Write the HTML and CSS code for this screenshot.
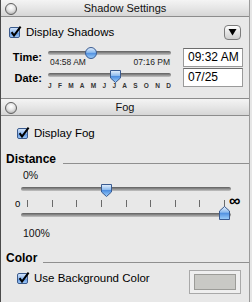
FILE: index.html
```html
<!DOCTYPE html>
<html>
<head>
<meta charset="utf-8" />
<link rel="stylesheet" href="styles.css">
<title>Shadow Settings</title>
</head>
<body>
<div class="window">

<div class="panelHeader">
  <span class="closeDot"></span>
  <span class="panelTitle">Shadow Settings</span>
</div>

<div class="panel shadowPanel">
  <div class="topRow">
    <div class="check">
      <svg class="checkBox" width="13" height="13" viewBox="0 0 13 13">
        <defs>
          <linearGradient id="cb1" x1="0" y1="0" x2="0" y2="1">
            <stop offset="0" stop-color="#d9e8fb"/>
            <stop offset="0.5" stop-color="#8fb8ee"/>
            <stop offset="0.55" stop-color="#5b94e2"/>
            <stop offset="1" stop-color="#a6cdf7"/>
          </linearGradient>
        </defs>
        <rect x="0.5" y="1.5" width="10" height="10" rx="1.5" fill="url(#cb1)" stroke="#3b5a8c"/>
        <path d="M2.6 6.2 L5 9.6 L11.6 0.6" fill="none" stroke="#000" stroke-width="2"/>
      </svg>
      <span>Display Shadows</span>
    </div>
    <span class="popButton">
      <svg width="9" height="8" viewBox="0 0 9 8"><path d="M0.5 1 H8.5 L4.5 7.5 Z" fill="#000"/></svg>
    </span>
  </div>

  <div class="sliderGrid">
    <div class="fieldLabel timeLabel">Time:</div>
    <div class="sliderCell">
      <div class="track timeTrack">
        <span class="thumb thumbTime">
          <svg width="12" height="12" viewBox="0 0 12 12">
            <defs>
              <linearGradient id="tb1" x1="0" y1="0" x2="0" y2="1">
                <stop offset="0" stop-color="#e6f1fd"/>
                <stop offset="0.45" stop-color="#8ab9ee"/>
                <stop offset="0.5" stop-color="#4f8fe0"/>
                <stop offset="1" stop-color="#9fd0fb"/>
              </linearGradient>
            </defs>
            <circle cx="6" cy="6" r="5.5" fill="url(#tb1)" stroke="#3a5b90"/>
          </svg>
        </span>
      </div>
      <div class="timeLabels"><span>04:58 AM</span><span>07:16 PM</span></div>
    </div>
    <div class="textBox">09:32 AM</div>

    <div class="fieldLabel dateLabel">Date:</div>
    <div class="sliderCell">
      <div class="track dateTrack">
        <span class="thumb thumbDate">
          <svg width="11" height="13" viewBox="0 0 11 13">
            <defs>
              <linearGradient id="tb2" x1="0" y1="0" x2="0" y2="1">
                <stop offset="0" stop-color="#e6f1fd"/>
                <stop offset="0.45" stop-color="#8ab9ee"/>
                <stop offset="0.5" stop-color="#4f8fe0"/>
                <stop offset="1" stop-color="#9fd0fb"/>
              </linearGradient>
            </defs>
            <path d="M0.5 0.5 H10.5 V8 L5.5 12.5 L0.5 8 Z" fill="url(#tb2)" stroke="#3a5b90"/>
          </svg>
        </span>
      </div>
      <div class="months">
        <span>J</span><span>F</span><span>M</span><span>A</span><span>M</span><span>J</span>
        <span>J</span><span>A</span><span>S</span><span>O</span><span>N</span><span>D</span>
      </div>
    </div>
    <div class="textBox">07/25</div>
  </div>
</div>

<div class="panelHeader">
  <span class="closeDot"></span>
  <span class="panelTitle">Fog</span>
</div>

<div class="panel fogPanel">
  <div class="check fogCheck">
    <svg class="checkBox" width="13" height="13" viewBox="0 0 13 13">
      <defs>
        <linearGradient id="cb2" x1="0" y1="0" x2="0" y2="1">
          <stop offset="0" stop-color="#d9e8fb"/>
          <stop offset="0.5" stop-color="#8fb8ee"/>
          <stop offset="0.55" stop-color="#5b94e2"/>
          <stop offset="1" stop-color="#a6cdf7"/>
        </linearGradient>
      </defs>
      <rect x="0.5" y="1.5" width="10" height="10" rx="1.5" fill="url(#cb2)" stroke="#3b5a8c"/>
      <path d="M2.6 6.2 L5 9.6 L11.6 0.6" fill="none" stroke="#000" stroke-width="2"/>
    </svg>
    <span>Display Fog</span>
  </div>

  <div class="groupHead distanceHead">
    <span>Distance</span>
    <span class="groupRule"></span>
  </div>

  <div class="smallValue zeroPct">0%</div>

  <div class="distRow distNear">
    <div class="track">
      <span class="thumb thumbNear">
        <svg width="11" height="13" viewBox="0 0 11 13">
          <defs>
            <linearGradient id="tb3" x1="0" y1="0" x2="0" y2="1">
              <stop offset="0" stop-color="#e6f1fd"/>
              <stop offset="0.45" stop-color="#8ab9ee"/>
              <stop offset="0.5" stop-color="#4f8fe0"/>
              <stop offset="1" stop-color="#9fd0fb"/>
            </linearGradient>
          </defs>
          <path d="M0.5 0.5 H10.5 V8 L5.5 12.5 L0.5 8 Z" fill="url(#tb3)" stroke="#3a5b90"/>
        </svg>
      </span>
    </div>
  </div>

  <div class="tickRow">
    <span class="tickEnd">0</span>
    <div class="ticks">
      <i></i><i></i><i></i><i></i><i></i><i></i><i></i><i></i><i></i>
    </div>
    <span class="infinity">&infin;</span>
  </div>

  <div class="distRow distFar">
    <div class="track">
      <span class="thumb thumbFar">
        <svg width="11" height="14" viewBox="0 0 11 14">
          <defs>
            <linearGradient id="tb4" x1="0" y1="0" x2="0" y2="1">
              <stop offset="0" stop-color="#e6f1fd"/>
              <stop offset="0.45" stop-color="#8ab9ee"/>
              <stop offset="0.5" stop-color="#4f8fe0"/>
              <stop offset="1" stop-color="#9fd0fb"/>
            </linearGradient>
          </defs>
          <path d="M0.5 13.5 H10.5 V5 L5.5 0.5 L0.5 5 Z" fill="url(#tb4)" stroke="#3a5b90"/>
        </svg>
      </span>
    </div>
  </div>

  <div class="smallValue fullPct">100%</div>

  <div class="groupHead colorHead">
    <span>Color</span>
    <span class="groupRule"></span>
  </div>

  <div class="colorRow">
    <div class="check">
      <svg class="checkBox" width="13" height="13" viewBox="0 0 13 13">
        <defs>
          <linearGradient id="cb3" x1="0" y1="0" x2="0" y2="1">
            <stop offset="0" stop-color="#d9e8fb"/>
            <stop offset="0.5" stop-color="#8fb8ee"/>
            <stop offset="0.55" stop-color="#5b94e2"/>
            <stop offset="1" stop-color="#a6cdf7"/>
          </linearGradient>
        </defs>
        <rect x="0.5" y="1.5" width="10" height="10" rx="1.5" fill="url(#cb3)" stroke="#3b5a8c"/>
        <path d="M2.6 6.2 L5 9.6 L11.6 0.6" fill="none" stroke="#000" stroke-width="2"/>
      </svg>
      <span>Use Background Color</span>
    </div>
    <div class="colorWell"><div class="colorSwatch"></div></div>
  </div>
</div>

</div>
</body>
</html>
```

FILE: styles.css
```css
body
{
    margin: 0;
    background-color: #e6e6e6;
    font-family: "Liberation Sans", Arial, sans-serif;
    color: #000;
}

.window
{
    width: 248px;
    height: 302px;
    border-left: 1px solid #4a4a4a;
    border-right: 1px solid #9a9a9a;
    background-color: #e8e8e8;
}

/* panel title bars */

.panelHeader
{
    display: grid;
    grid-template-columns: 1fr auto 1fr;
    align-items: start;
    height: 16px;
    border-bottom: 1px solid #8c8c8c;
    background: linear-gradient(#f4f4f4, #e6e6e6 50%, #d6d6d6);
}

.closeDot
{
    width: 10px;
    height: 10px;
    margin: 3px 0 0 4px;
    border: 1px solid #5f5f5f;
    border-radius: 50%;
    background: radial-gradient(circle at 50% 35%, #ffffff 0, #e4e4e4 45%, #9c9c9c 100%);
}

.panelTitle
{
    font-size: 11px;
    line-height: 17px;
    color: #111;
}

.panel
{
    box-sizing: border-box;
}

.shadowPanel
{
    height: 82px;
    border-bottom: 1px solid #8c8c8c;
}

/* checkboxes */

.check
{
    display: flex;
    align-items: center;
    font-size: 11.5px;
    line-height: 13px;
}

.checkBox
{
    flex: none;
    margin-right: 4px;
}

.topRow
{
    display: flex;
    align-items: center;
    justify-content: space-between;
    height: 14px;
    padding: 8px 8px 0 8px;
}

.popButton
{
    display: flex;
    align-items: center;
    justify-content: center;
    box-sizing: border-box;
    width: 17px;
    height: 15px;
    border: 1px solid #7c7c7c;
    border-radius: 4px;
    background: linear-gradient(#ffffff, #e4e4e4 50%, #cfcfcf);
}

/* time / date sliders */

.sliderGrid
{
    display: grid;
    grid-template-columns: 47px 135px 60px;
    grid-template-rows: 19px 19px;
    row-gap: 1px;
    margin-top: 9px;
}

.fieldLabel
{
    text-align: right;
    padding-right: 6px;
    font-size: 11px;
    font-weight: bold;
    line-height: 13px;
}

.timeLabel
{
    padding-top: 3px;
}

.dateLabel
{
    padding-top: 4px;
}

.sliderCell
{
    width: 123px;
}

.track
{
    position: relative;
    height: 4px;
    border-radius: 2px;
    background: linear-gradient(#5e5e5e, #8e8e8e 50%, #c4c4c4);
}

.timeTrack
{
    margin-top: 3px;
}

.dateTrack
{
    margin-top: 5px;
}

.thumb
{
    position: absolute;
    display: block;
    line-height: 0;
}

.thumbTime
{
    left: 37px;
    top: -4px;
}

.thumbDate
{
    left: 62px;
    top: -3px;
}

.timeLabels
{
    display: flex;
    justify-content: space-between;
    margin-top: 3px;
    padding: 0 1px 0 2px;
    font-size: 8.5px;
    line-height: 9px;
    color: #222;
}

.months
{
    display: flex;
    justify-content: space-between;
    margin-top: 5px;
    font-size: 6.5px;
    font-weight: bold;
    line-height: 7px;
    color: #333;
}

.textBox
{
    box-sizing: border-box;
    height: 19px;
    padding-left: 4px;
    border: 1px solid #9a9a9a;
    border-top-color: #6c6c6c;
    background-color: #fff;
    font-size: 12px;
    line-height: 17px;
}

/* fog panel */

.fogCheck
{
    margin: 11px 0 0 16px;
}

.groupHead
{
    display: flex;
    align-items: flex-start;
    padding-left: 5px;
    font-size: 12px;
    font-weight: bold;
    line-height: 14px;
}

.groupRule
{
    flex: 1;
    height: 11px;
    border-bottom: 1px solid #8f8f8f;
}

.distanceHead
{
    margin-top: 12px;
}

.distanceHead .groupRule
{
    margin-left: 7px;
}

.colorHead
{
    margin-top: 12px;
}

.colorHead .groupRule
{
    margin-left: 6px;
}

.smallValue
{
    padding-left: 22px;
    font-size: 10.5px;
    line-height: 11px;
    color: #111;
}

.zeroPct
{
    margin-top: 4px;
}

.fullPct
{
    margin-top: 5px;
}

.distRow
{
    width: 210px;
    padding-left: 20px;
}

.distNear
{
    height: 8px;
    margin-top: 6px;
}

.distNear .track
{
    margin-top: 2px;
}

.distFar
{
    height: 10px;
}

.distFar .track
{
    margin-top: 4px;
}

.thumbNear
{
    left: 80px;
    top: -3px;
}

.thumbFar
{
    left: 198px;
    top: -7px;
}

.tickRow
{
    display: flex;
    align-items: flex-start;
    height: 14px;
    padding-left: 14px;
}

.tickEnd
{
    width: 6px;
    margin-top: 4px;
    font-size: 9.5px;
    line-height: 10px;
}

.ticks
{
    display: flex;
    justify-content: space-between;
    width: 198px;
    margin: 5px 0 0 6px;
}

.ticks i
{
    display: block;
    width: 1px;
    height: 7px;
    background-color: #6a6a6a;
}

.infinity
{
    margin: 0 0 0 4px;
    font-size: 16px;
    font-weight: bold;
    line-height: 12px;
}

.colorRow
{
    display: flex;
    align-items: flex-start;
    margin-top: 5px;
    padding: 0 8px 0 16px;
}

.colorRow .check
{
    margin-top: 2px;
}

.colorWell
{
    box-sizing: border-box;
    width: 52px;
    height: 24px;
    margin-left: auto;
    padding: 3px 4px;
    border: 1px solid #a9a9a9;
    background-color: #efefef;
}

.colorSwatch
{
    height: 16px;
    box-sizing: border-box;
    border: 1px solid #9c9c98;
    background-color: #c9c9c5;
}
```
